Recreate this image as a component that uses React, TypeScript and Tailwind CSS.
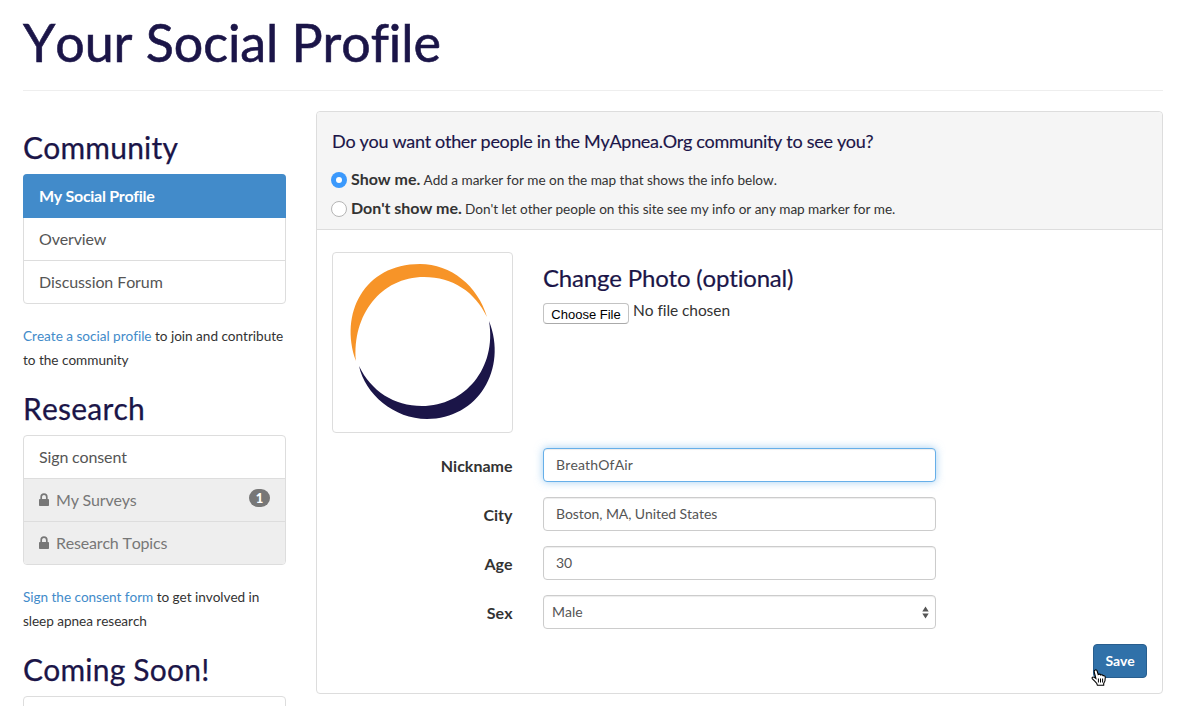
import React from "react";

const SideHeading = ({ children }: { children: React.ReactNode }) => (
  <h2 className="h-[33px] text-[30px] leading-[33px] tracking-[0.2px] text-[#1b1548] whitespace-nowrap [-webkit-text-stroke:0.25px_#1b1548]">{children}</h2>
);

const Lock = () => (
  <svg className="mr-[7px] mb-px h-[13px] w-[10px]" viewBox="0 0 10 13" fill="none">
    <path d="M2.2 6.5 V4 C2.2 0.1 7.8 0.1 7.8 4 V6.5" stroke="#777" strokeWidth="1.7" />
    <rect x="0" y="6" width="10" height="7" rx="0.8" fill="#777" />
  </svg>
);

const row = "flex h-[43px] items-center border-b border-[#ddd] px-[15px] pb-px text-[16px] tracking-[-0.15px] whitespace-nowrap";

function Field({ label, children }: { label: string; children: React.ReactNode }) {
  return (
    <div className="mb-[15px] flex h-[34px]">
      <label className="w-[181px] shrink-0 pt-[6px] pr-[0.5px] text-right text-[16px] leading-6 font-bold text-[#333]">{label}</label>
      <div className="ml-[30px] w-[393px]">{children}</div>
    </div>
  );
}

const input =
  "block h-[34px] w-full rounded border px-3 pb-[2px] text-[14px] leading-5 text-[#555] outline-none bg-white";

export default function App() {
  return (
    <div className="relative h-[706px] w-[1179px] overflow-hidden bg-white pl-[23px] font-['Lato',sans-serif] text-[#333] [font-kerning:none] [font-variant-ligatures:none]">
      <div className="w-[1140px]">
        <h1 className="h-[91px] border-b border-[#eee] pt-[13px] text-[52px] leading-[59px] tracking-[-0.1px] text-[#1b1548] [-webkit-text-stroke:0.6px_#1b1548]">
          Your Social Profile
        </h1>
        <div className="flex gap-[30px]">
          <aside className="w-[263px] shrink-0 pt-10">
            <SideHeading>Community</SideHeading>
            <nav className="mt-[10px] h-[130px] rounded border border-[#ddd] text-[#555]">
              <div className="-mx-px -mt-px flex h-[44px] items-center rounded-t bg-[#428bca] px-4 text-[16px] tracking-[-0.3px] font-bold text-white">
                My Social Profile
              </div>
              <div className={row}>Overview</div>
              <div className="flex h-[42px] items-center px-[15px] text-[16px] tracking-[-0.1px]">Discussion Forum</div>
            </nav>
            <p className="mt-5 h-12 text-[13.6px] leading-6 tracking-[-0.03px] whitespace-nowrap">
              <a className="text-[#428bca]">Create a social profile</a> to join and contribute
              <br />
              to the community
            </p>
            <div className="h-5" />
            <SideHeading>Research</SideHeading>
            <nav className="mt-[10px] h-[130px] overflow-hidden rounded border border-[#ddd] text-[#555]">
              <div className={row}>Sign consent</div>
              <div className="flex h-[43px] items-center border-b border-[#ddd] bg-[#eee] px-[15px] pb-px text-[16px] tracking-[-0.2px] text-[#777]">
                <Lock />
                My Surveys
                <span className="mb-[3px] ml-auto flex h-[18px] w-[21px] items-center justify-center rounded-full bg-[#777] text-[13px] leading-none font-black text-white">
                  1
                </span>
              </div>
              <div className="flex h-[42px] items-center bg-[#eee] px-[15px] text-[16px] tracking-[-0.2px] text-[#777]">
                <Lock />
                Research Topics
              </div>
            </nav>
            <p className="mt-5 h-12 text-[13.6px] leading-6 tracking-[-0.05px] whitespace-nowrap">
              <a className="text-[#428bca]">Sign the consent form</a> to get involved in
              <br />
              sleep apnea research
            </p>
            <div className="h-5" />
            <SideHeading>Coming Soon!</SideHeading>
            <div className="mt-[10px] h-[130px] rounded border border-[#ddd]" />
          </aside>
          <main className="mt-5 h-[583px] w-[847px] rounded border border-[#ddd]">
            <section className="h-[118px] rounded-t border-b border-[#ddd] bg-[#f5f5f5] px-[15px] pt-[19px]">
              <h4 className="text-[18px] leading-5 tracking-[-0.31px] text-[#1b1548] [-webkit-text-stroke:0.15px_#1b1548]">Do you want other people in the MyApnea.Org community to see you?</h4>
              <div className="mt-[14px] flex h-[29px] items-center">
                <span className="-ml-px mr-[4px] flex size-4 items-center justify-center rounded-full bg-[#3b99fc]">
                  <span className="size-[6px] rounded-full bg-white" />
                </span>
                <p className="text-[13.6px] leading-6 tracking-[-0.04px]">
                  <b className="text-[16px]">Show me.</b> Add a marker for me on the map that shows the info below.
                </p>
              </div>
              <div className="flex h-[29px] items-center">
                <span className="-ml-px mr-[4px] size-4 rounded-full border border-[#b5b5b5] bg-white" />
                <p className="text-[13.6px] leading-6 tracking-[-0.05px]">
                  <b className="text-[16px]">Don't show me.</b> Don't let other people on this site see my info or any map marker for me.
                </p>
              </div>
            </section>
            <section className="px-[15px] pt-[22px]">
              <div className="flex h-[196px]">
                <div className="h-[181px] w-[181px] rounded border border-[#ddd]">
                  <svg width="179" height="179" viewBox="333 253 179 179">
                    <path d="M356 361 C339 314 364 264 420 264 C451 264 478 286 487 317 C475 292 453 277 424 277 C381 277 352 315 356 361Z" fill="#f79428" />
                    <path d="M489 321 C508 369 478 419 427 419 C394 419 365 394 359 366 C371 391 394 406 422 406 C465 406 497 368 489 321Z" fill="#1b1548" />
                  </svg>
                </div>
                <div className="ml-[30px] pt-[13px]">
                  <h3 className="text-[24px] leading-[26px] tracking-[-0.19px] text-[#1b1548] [-webkit-text-stroke:0.2px_#1b1548]">Change Photo (optional)</h3>
                  <div className="mt-[7px] flex items-start">
                    <span className="mt-[5px] flex h-[21px] w-[86px] items-center justify-center rounded border border-[#c3c3c3] border-b-[#aaa] bg-white pt-[2px] font-['Liberation_Sans',sans-serif] text-[13px] text-black">
                      Choose File
                    </span>
                    <span className="ml-1 text-[15.5px] leading-6 tracking-[-0.07px]">No file chosen</span>
                  </div>
                </div>
              </div>
              <Field label="Nickname">
                <input readOnly value="BreathOfAir" className={`${input} tracking-[0.15px] border-[#66afe9] shadow-[inset_0_1px_1px_rgba(0,0,0,0.075),0_0_8px_rgba(102,175,233,0.6)]`} />
              </Field>
              <Field label="City">
                <input readOnly value="Boston, MA, United States" className={`${input} tracking-[-0.08px] border-[#ccc] shadow-[inset_0_1px_1px_rgba(0,0,0,0.075)]`} />
              </Field>
              <Field label="Age">
                <input readOnly value="30" className={`${input} border-[#ccc] shadow-[inset_0_1px_1px_rgba(0,0,0,0.075)]`} />
              </Field>
              <Field label="Sex">
                <div className="flex h-[34px] items-center justify-between rounded border border-[#ccc] pr-[6px] pl-2 text-[14px] text-[#555] shadow-[inset_0_1px_1px_rgba(0,0,0,0.075)]">
                  <span className="pb-[2px]">Male</span>
                  <svg width="7" height="13" viewBox="0 0 7 13" fill="#555">
                    <path d="M3.5 0.5 L6.7 5.5 H0.3Z M3.5 12.5 L6.7 7.5 H0.3Z" />
                  </svg>
                </div>
              </Field>
              <div className="flex justify-end">
                <button className="h-[34px] w-[54px] rounded border border-[#285e8e] bg-[#3071a9] pb-[2px] text-[14px] tracking-[-0.2px] font-bold text-white">Save</button>
              </div>
            </section>
          </main>
        </div>
      </div>
      <svg className="absolute top-[669px] left-[1091px]" width="16" height="18" viewBox="0 0 16 18">
        <path
          d="M4.2 1 C5.4 0.6 6 1.4 6.3 2.5 L7.2 5.6 C8 4.9 9.2 5 9.7 6 C10.5 5.4 11.7 5.7 12 6.7 C13.2 6.4 14.2 7 14.3 8.3 C14.4 11 13.8 13 12.7 14.3 V16.3 H6.4 L5.8 14.5 C4.5 12.8 2.8 11.5 1.2 9.6 C0.6 8.4 2 7.6 3.3 8.4 L4.9 9.5 L3.2 2.8 C3 1.8 3.4 1.2 4.2 1Z"
          fill="white" stroke="black" strokeWidth="1.1"
        />
        <path d="M7.4 9.5 V13.5 M9.5 9.5 V13.5 M11.6 9.5 V13.5" stroke="black" strokeWidth="1" />
      </svg>
    </div>
  );
}
